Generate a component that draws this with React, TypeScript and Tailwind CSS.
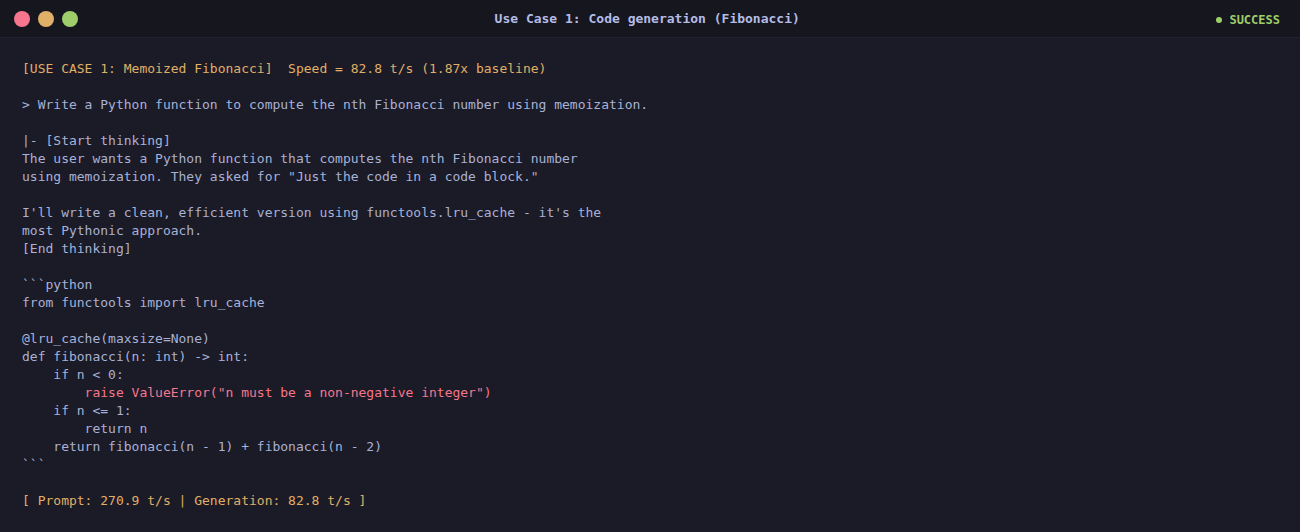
import React from "react";

type Line = { text: string; tone?: "accent" | "error" };

const LINES: Line[] = [
  { text: "[USE CASE 1: Memoized Fibonacci]  Speed = 82.8 t/s (1.87x baseline)", tone: "accent" },
  { text: "" },
  { text: "> Write a Python function to compute the nth Fibonacci number using memoization." },
  { text: "" },
  { text: "|- [Start thinking]" },
  { text: "The user wants a Python function that computes the nth Fibonacci number" },
  { text: 'using memoization. They asked for "Just the code in a code block."' },
  { text: "" },
  { text: "I'll write a clean, efficient version using functools.lru_cache - it's the" },
  { text: "most Pythonic approach." },
  { text: "[End thinking]" },
  { text: "" },
  { text: "```python" },
  { text: "from functools import lru_cache" },
  { text: "" },
  { text: "@lru_cache(maxsize=None)" },
  { text: "def fibonacci(n: int) -> int:" },
  { text: "    if n < 0:" },
  { text: '        raise ValueError("n must be a non-negative integer")', tone: "error" },
  { text: "    if n <= 1:" },
  { text: "        return n" },
  { text: "    return fibonacci(n - 1) + fibonacci(n - 2)" },
  { text: "```" },
  { text: "" },
  { text: "[ Prompt: 270.9 t/s | Generation: 82.8 t/s ]", tone: "accent" },
];

const toneClass = (tone?: Line["tone"]) => {
  if (tone === "accent") return "text-[#e0af68]";
  if (tone === "error") return "text-[#f7768e]";
  return "text-[#a9b1d6]";
};

export default function App() {
  return (
    <div
      className="w-[1300px] h-[532px] bg-[#1a1b26] flex flex-col overflow-hidden"
      style={{ fontFamily: '"DejaVu Sans Mono", "Liberation Mono", monospace' }}
    >
      {/* title bar */}
      <header className="h-[38px] shrink-0 bg-[#16161e] border-b border-[#1f2030] flex items-center px-[14px]">
        <div className="flex items-center gap-2">
          <span className="w-4 h-4 rounded-full bg-[#f7768e]" />
          <span className="w-4 h-4 rounded-full bg-[#e0af68]" />
          <span className="w-4 h-4 rounded-full bg-[#9ece6a]" />
        </div>
        <div className="flex-1 text-center text-[13px] font-bold text-[#b4bce6]">
          Use Case 1: Code generation (Fibonacci)
        </div>
        <div className="flex items-center gap-[7px] mt-[3px] pr-[6px] text-[12px] font-bold text-[#9ece6a]">
          <span className="w-[6px] h-[6px] rounded-full bg-[#9ece6a]" />
          SUCCESS
        </div>
      </header>

      {/* terminal body */}
      <main className="flex-1 px-[22px] pt-[22px] text-[13px] leading-[18px]">
        {LINES.map((line, i) => (
          <div key={i} className={`whitespace-pre h-[18px] ${toneClass(line.tone)}`}>
            {line.text || " "}
          </div>
        ))}
      </main>
    </div>
  );
}
